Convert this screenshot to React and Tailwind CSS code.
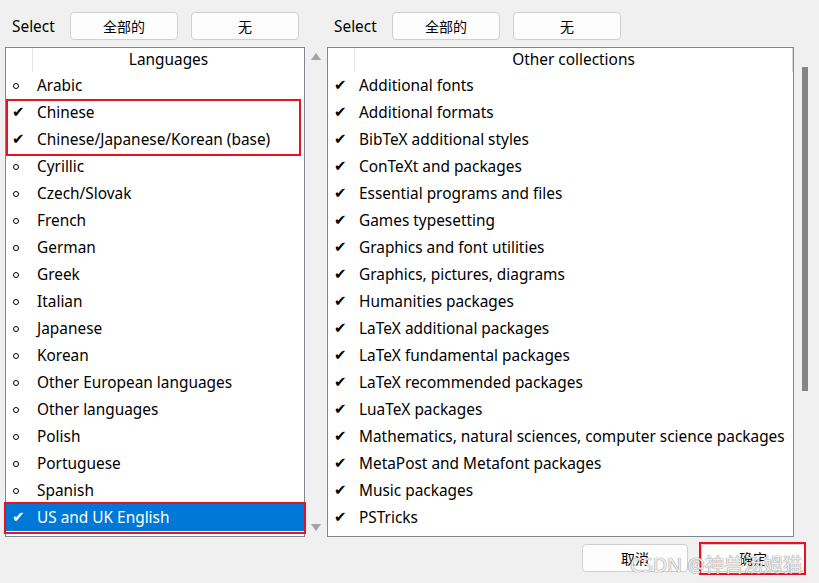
import React from 'react'

const languages = [
  { name: 'Arabic', on: false },
  { name: 'Chinese', on: true },
  { name: 'Chinese/Japanese/Korean (base)', on: true },
  { name: 'Cyrillic', on: false },
  { name: 'Czech/Slovak', on: false },
  { name: 'French', on: false },
  { name: 'German', on: false },
  { name: 'Greek', on: false },
  { name: 'Italian', on: false },
  { name: 'Japanese', on: false },
  { name: 'Korean', on: false },
  { name: 'Other European languages', on: false },
  { name: 'Other languages', on: false },
  { name: 'Polish', on: false },
  { name: 'Portuguese', on: false },
  { name: 'Spanish', on: false },
  { name: 'US and UK English', on: true, selected: true },
]

const collections = [
  'Additional fonts',
  'Additional formats',
  'BibTeX additional styles',
  'ConTeXt and packages',
  'Essential programs and files',
  'Games typesetting',
  'Graphics and font utilities',
  'Graphics, pictures, diagrams',
  'Humanities packages',
  'LaTeX additional packages',
  'LaTeX fundamental packages',
  'LaTeX recommended packages',
  'LuaTeX packages',
  'Mathematics, natural sciences, computer science packages',
  'MetaPost and Metafont packages',
  'Music packages',
  'PSTricks',
]

function Btn({ children, className = 'w-[108px]' }) {
  return (
    <button className={`h-[28px] bg-[#fdfdfd] border border-[#d0d0d0] rounded-[4px] text-[14px] text-black flex items-center justify-center ${className}`}>
      {children}
    </button>
  )
}

function SelectRow() {
  return (
    <div className="flex items-center h-[28px] gap-[13px]">
      <span className="ml-[7px] w-[45px] text-[15.4px] pt-[2px]">Select</span>
      <Btn>全部的</Btn>
      <Btn>无</Btn>
    </div>
  )
}

function Mark({ on, selected }) {
  return (
    <span className="w-[31px] shrink-0 flex items-center pl-[6px]">
      {on ? (
        <span className={`text-[15px] leading-none ${selected ? 'text-white' : 'text-black'}`} style={{ fontFamily: '"DejaVu Sans", sans-serif' }}>✔</span>
      ) : (
        <span className="ml-[1px] w-[6px] h-[6px] rounded-full border border-black" />
      )}
    </span>
  )
}

export default function App() {
  return (
    <div
      className="w-[819px] h-[583px] bg-[#f0f0f0] relative overflow-hidden text-black"
      style={{ fontFamily: '"Noto Sans", "Noto Sans CJK SC", sans-serif' }}
    >
      {/* top select rows */}
      <div className="flex pt-[12px] pl-[5px] h-[47px]">
        <div className="w-[322px]"><SelectRow /></div>
        <div><SelectRow /></div>
      </div>

      {/* lists */}
      <div className="flex pl-[5px] h-[490px] text-[15.4px]">
        {/* languages list */}
        <div className="w-[300px] h-full bg-white border border-[#828790] flex flex-col">
          <div className="h-[24px] flex shrink-0">
            <div className="w-[27px] border-r border-[#e5e5e5]" />
            <div className="flex-1 flex items-center justify-center">Languages</div>
          </div>
          <div className="flex flex-col">
            {languages.map((l, i) => (
              <div
                key={l.name}
                className={`h-[27px] flex items-center relative ${l.selected ? 'bg-[#0078d7] text-white' : ''}`}
              >
                <Mark on={l.on} selected={l.selected} />
                <span className="whitespace-nowrap">{l.name}</span>
                {l.selected && (
                  <div className="absolute left-[-2px] right-[-2px] top-[-2px] bottom-[-3px] border-2 border-[#e81123]" />
                )}
                {i === 1 && (
                  <div className="absolute left-[0px] w-[295px] top-[0px] h-[57px] border-2 border-[#e81123] pointer-events-none" />
                )}
              </div>
            ))}
          </div>
        </div>

        {/* middle scrollbar */}
        <div className="w-[22px] h-full flex flex-col items-center justify-between py-[6px]">
          <svg width="10" height="7" viewBox="0 0 10 7"><path d="M5 0 L10 7 L0 7 Z" fill="#a3a3a3" /></svg>
          <svg width="10" height="7" viewBox="0 0 10 7"><path d="M0 0 L10 0 L5 7 Z" fill="#a3a3a3" /></svg>
        </div>

        {/* collections list */}
        <div className="w-[467px] h-full bg-white border border-[#828790] flex flex-col">
          <div className="h-[24px] flex shrink-0">
            <div className="w-[27px] border-r border-[#e5e5e5]" />
            <div className="flex-1 flex items-center justify-center">Other collections</div>
            <div className="w-px bg-[#d9d9d9]" />
          </div>
          <div className="flex flex-col">
            {collections.map(c => (
              <div key={c} className="h-[27px] flex items-center">
                <Mark on />
                <span className="whitespace-nowrap">{c}</span>
              </div>
            ))}
          </div>
        </div>

        {/* right scrollbar */}
        <div className="w-[22px] h-full pt-[20px] flex justify-center">
          <div className="w-[6px] h-[324px] bg-[#858585] ml-[-1px]" />
        </div>
      </div>

      {/* bottom buttons */}
      <div className="flex justify-end items-center pr-[14px] pt-[7px] gap-[13px]">
        <Btn className="w-[106px]">取消</Btn>
        <div className="relative">
          <Btn className="w-[104px]">确定</Btn>
          <div className="absolute left-[-2px] right-[-1px] top-[-2px] bottom-[-3px] border-2 border-[#e81123]" />
        </div>
      </div>

      <div
        className="absolute left-[630px] top-[550px] text-[19.5px] text-white/85 whitespace-nowrap pointer-events-none"
        style={{ textShadow: '0 0 1px #8a8a8a, 0 0 1px #8a8a8a' }}
      >
        CSDN @神兽汤姆猫
      </div>
    </div>
  )
}
